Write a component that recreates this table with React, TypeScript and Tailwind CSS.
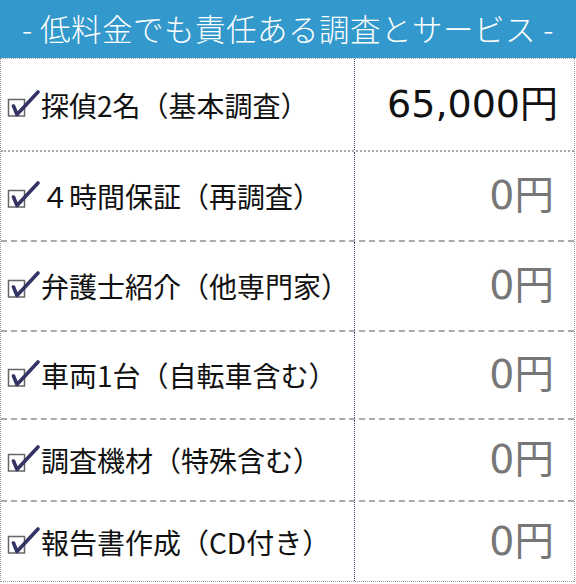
import React from 'react';

interface Row {
  label: string;
  price: string;
  main?: boolean;
  h: string;
}

const rows: Row[] = [
  { label: '探偵2名（基本調査）', price: '65,000円', main: true, h: 'h-[94px]' },
  { label: '４時間保証（再調査）', price: '0円', h: 'h-[90px]' },
  { label: '弁護士紹介（他専門家）', price: '0円', h: 'h-[90px]' },
  { label: '車両1台（自転車含む）', price: '0円', h: 'h-[88px]' },
  { label: '調査機材（特殊含む）', price: '0円', h: 'h-[82px]' },
  { label: '報告書作成（CD付き）', price: '0円', h: 'h-[80px]' },
];

const CheckBox = () => (
  <svg width="34" height="30" viewBox="0 0 34 30" className="shrink-0">
    <rect x="1.5" y="9.5" width="16" height="16.5" fill="none" stroke="#666" strokeWidth="1.5" />
    <path d="M6.5 16 L10 24.5 L31 2" fill="none" stroke="#333366" strokeWidth="3.6" strokeLinecap="round" strokeLinejoin="round" />
  </svg>
);

export default function App() {
  return (
    <div className="w-[576px] h-[584px] bg-white" style={{ fontFamily: '"Noto Sans CJK JP", "Noto Sans", sans-serif' }}>
      <div className="h-[58px] bg-[#3399cc] flex items-center justify-center text-white text-[30.5px] font-light tracking-[0.5px]">
        - 低料金でも責任ある調査とサービス -
      </div>
      <div className="w-[575px] border border-dotted border-[#999] border-t-0 border-b-0">
        {rows.map((r, i) => (
          <div
            key={i}
            className={`flex ${r.h} ${i === 0 ? 'border-t border-dotted border-[#999]' : ''} ${i < rows.length - 1 ? 'border-b-2 border-dashed border-[#aaa]' : 'border-b border-dotted border-[#999]'}`}
          >
            <div className="w-[354px] flex items-center pl-[6px] border-r border-dotted border-[#44447a] text-[28px] text-[#111] whitespace-nowrap">
              <CheckBox />
              <span>{r.label}</span>
            </div>
            <div
              className={`flex-1 flex items-center justify-end ${r.main ? 'pr-[16px] text-[38px] text-[#111]' : 'pr-[20px] text-[39.5px] text-[#777]'}`}
              style={{ fontFamily: '"DejaVu Sans", "Noto Sans CJK JP", sans-serif' }}
            >
              {r.price}
            </div>
          </div>
        ))}
      </div>
    </div>
  );
}
